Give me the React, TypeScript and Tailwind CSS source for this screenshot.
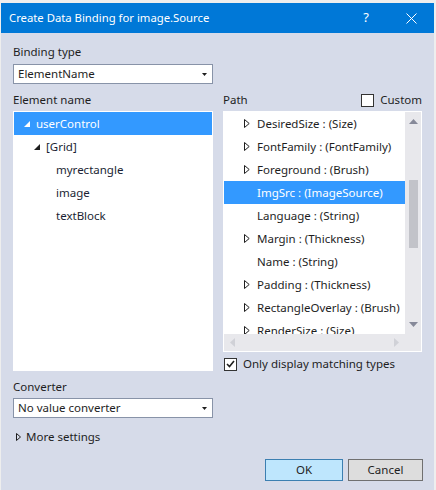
import React from "react";

const Expanded = ({ color = "#1e1e1e" }: { color?: string }) => (
  <svg width="6" height="6" viewBox="0 0 6 6" className="shrink-0">
    <path d="M6 0L6 6L0 6Z" fill={color} />
  </svg>
);

const Collapsed = () => (
  <svg width="6" height="9" viewBox="0 0 6 9" className="shrink-0">
    <path d="M0.5 0.5L5.2 4.5L0.5 8.5Z" fill="none" stroke="#1e1e1e" strokeWidth="1" />
  </svg>
);

const Arrow = () => (
  <svg width="5" height="3" viewBox="0 0 5 3">
    <path d="M0 0H5L2.5 3Z" fill="#1e1e1e" />
  </svg>
);

const Dropdown = ({ value }: { value: string }) => (
  <div className="flex h-[20px] w-[200px] items-center justify-between border border-[#8893a8] bg-white pl-[4px] pr-[5px]">
    <span>{value}</span>
    <Arrow />
  </div>
);

const treeRows = [
  { label: "userControl", indent: "pl-[10px]", expanded: true, selected: true },
  { label: "[Grid]", indent: "pl-[20px]", expanded: true },
  { label: "myrectangle", indent: "pl-[42px]" },
  { label: "image", indent: "pl-[42px]" },
  { label: "textBlock", indent: "pl-[42px]" },
];

const pathRows = [
  { label: "DesiredSize : (Size)", more: true },
  { label: "FontFamily : (FontFamily)", more: true },
  { label: "Foreground : (Brush)", more: true },
  { label: "ImgSrc : (ImageSource)", selected: true },
  { label: "Language : (String)" },
  { label: "Margin : (Thickness)", more: true },
  { label: "Name : (String)" },
  { label: "Padding : (Thickness)", more: true },
  { label: "RectangleOverlay : (Brush)", more: true },
  { label: "RenderSize : (Size)", more: true },
];

export default function App() {
  return (
    <div className="h-[490px] w-[436px] bg-[#eeeeee] pl-[1px] pt-[3px] font-['Noto_Sans',sans-serif] text-[11.5px] text-[#1e1e1e]">
      <div className="flex h-[487px] w-[433px] flex-col bg-[#d6dbe9]">
        {/* title bar */}
        <div className="flex h-[30px] shrink-0 items-center bg-[#0078d7] pl-[8px] text-white">
          <span className="text-[11.3px]">Create Data Binding for image.Source</span>
          <div className="ml-auto flex h-full w-[46px] items-center justify-center text-[13px]">?</div>
          <div className="flex h-full w-[45px] items-center justify-center">
            <svg width="11" height="11" viewBox="0 0 11 11">
              <path d="M0.5 0.5L10.5 10.5M10.5 0.5L0.5 10.5" stroke="white" strokeWidth="1" />
            </svg>
          </div>
        </div>

        <div className="flex flex-col pl-[12px] pr-[11px] pt-[11px] leading-[16px]">
          <div>Binding type</div>
          <div className="mt-[4px]">
            <Dropdown value="ElementName" />
          </div>

          <div className="mt-[8px] flex items-start gap-[10px]">
            {/* element tree */}
            <div className="flex w-[200px] flex-col">
              <div className="h-[16px]">Element name</div>
              <div className="mt-[3px] h-[260px] border border-white bg-white text-[#1b1f33]">
                {treeRows.map((r) => (
                  <div
                    key={r.label}
                    className={`flex h-[23px] items-center gap-[6px] ${r.indent} ${r.selected ? "bg-[#3399ff] text-white" : ""}`}
                  >
                    {r.expanded && <Expanded color={r.selected ? "#ffffff" : "#1e1e1e"} />}
                    <span>{r.label}</span>
                  </div>
                ))}
              </div>
            </div>

            {/* path list */}
            <div className="flex w-[199px] flex-col">
              <div className="flex h-[16px] items-center justify-between">
                <span>Path</span>
                <div className="flex items-center gap-[6px]">
                  <div className="h-[13px] w-[13px] border border-[#333333] bg-white" />
                  <span>Custom</span>
                </div>
              </div>
              <div className="mt-[3px] flex h-[241px] flex-col border border-white">
                <div className="flex h-[222px]">
                  <div className="w-[181px] overflow-hidden bg-white">
                    {pathRows.map((r) => (
                      <div
                        key={r.label}
                        className={`flex h-[23px] items-center whitespace-nowrap pl-[20px] ${r.selected ? "bg-[#3399ff] text-white" : ""}`}
                      >
                        <div className="flex w-[13px] shrink-0">{r.more && <Collapsed />}</div>
                        <span>{r.label}</span>
                      </div>
                    ))}
                  </div>
                  <div className="flex w-[16px] flex-col items-center bg-[#e8e8ec]">
                    <svg width="9" height="5" viewBox="0 0 9 5" className="mt-[7px]">
                      <path d="M0 5L4.5 0L9 5Z" fill="#868999" />
                    </svg>
                    <div className="mt-[56px] h-[68px] w-[9px] bg-[#c2c3c9]" />
                    <svg width="9" height="5" viewBox="0 0 9 5" className="mt-auto mb-[7px]">
                      <path d="M0 0L4.5 5L9 0Z" fill="#868999" />
                    </svg>
                  </div>
                </div>
                <div className="flex h-[17px] bg-[#e8e8ec]">
                  <div className="flex w-[181px] items-center justify-between px-[6px]">
                    <svg width="5" height="9" viewBox="0 0 5 9">
                      <path d="M5 0L0 4.5L5 9Z" fill="#d0d1d7" />
                    </svg>
                    <svg width="5" height="9" viewBox="0 0 5 9">
                      <path d="M0 0L5 4.5L0 9Z" fill="#d0d1d7" />
                    </svg>
                  </div>
                </div>
              </div>
              <div className="mt-[4px] flex items-center gap-[6px] pl-[1px]">
                <div className="flex h-[13px] w-[13px] items-center justify-center border border-[#333333] bg-white">
                  <svg width="9" height="8" viewBox="0 0 9 8">
                    <path d="M1 4L3.5 6.5L8 1" fill="none" stroke="#1e1e1e" strokeWidth="1.6" />
                  </svg>
                </div>
                <span>Only display matching types</span>
              </div>
            </div>
          </div>

          <div className="mt-[7px]">Converter</div>
          <div className="mt-[3px]">
            <Dropdown value="No value converter" />
          </div>

          <div className="mt-[11px] flex items-center gap-[5px] pl-[3px]">
            <svg width="5" height="8" viewBox="0 0 5 8">
              <path d="M0.5 0.5L4.5 4L0.5 7.5Z" fill="none" stroke="#1e1e1e" strokeWidth="1" />
            </svg>
            <span>More settings</span>
          </div>

          <div className="mt-[14px] flex justify-end gap-[5px]">
            <button className="h-[22px] w-[78px] border border-[#3c7fb1] bg-[#bee6fd]">OK</button>
            <button className="h-[22px] w-[75px] border border-[#707070] bg-[#dddddd]">Cancel</button>
          </div>
        </div>
      </div>
    </div>
  );
}
